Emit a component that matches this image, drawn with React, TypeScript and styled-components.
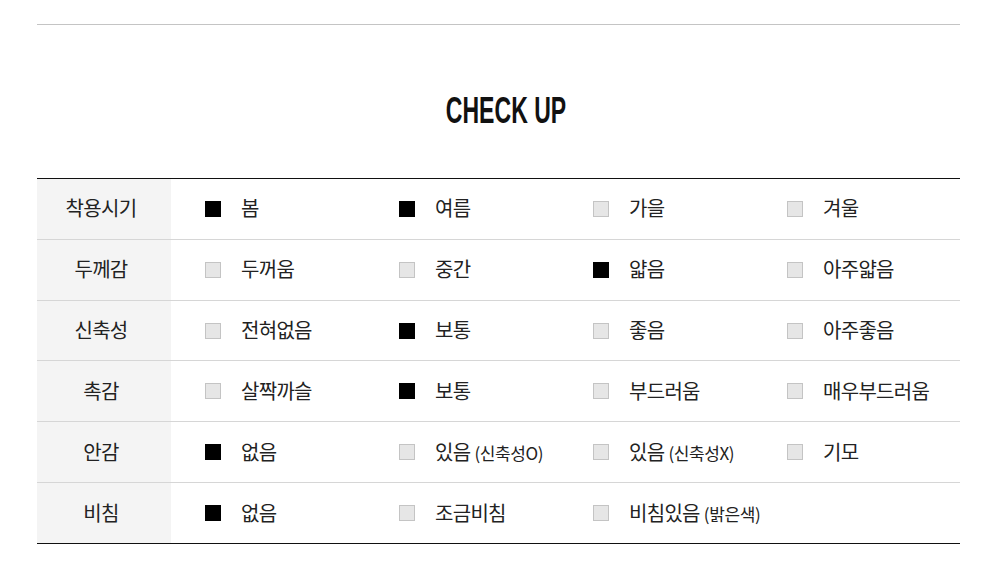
import React from "react";
import styled, { createGlobalStyle } from "styled-components";

const GlobalStyle = createGlobalStyle`
  html, body { margin: 0; padding: 0; background: #fff; }
  body { font-family: "Noto Sans CJK KR", "Noto Sans", sans-serif; color: #222; }
`;

const Page = styled.div`
  width: 923px;
  margin-left: 37px;
  padding-top: 24px;
`;

const TopRule = styled.div`
  height: 1px;
  background: #c4c4c4;
`;

const TitleWrap = styled.div`
  height: 153px;
  display: flex;
  align-items: center;
  justify-content: center;
  padding-left: 16px;
  padding-top: 18px;
  box-sizing: border-box;
`;

const Title = styled.h2`
  margin: 0;
  font-family: "Liberation Sans", Arial, sans-serif;
  font-weight: 700;
  font-size: 36px;
  line-height: 1;
  color: #111;
  transform: scale(0.64, 1.04);
  white-space: nowrap;
`;

const Table = styled.div`
  width: 923px;
  border-top: 1px solid #111;
  border-bottom: 1px solid #111;
`;

const Row = styled.div<{ $last?: boolean }>`
  display: flex;
  height: 59.83px;
  border-bottom: ${(p) => (p.$last ? "none" : "1px solid #d6d6d6")};
`;

const Label = styled.div`
  width: 134px;
  flex: none;
  background: #f4f4f4;
  display: flex;
  align-items: center;
  justify-content: center;
  font-size: 20px;
  letter-spacing: -0.7px;
  color: #222;
  padding-right: 6px;
  padding-bottom: 2px;
  box-sizing: border-box;
`;

const Options = styled.div`
  display: flex;
  align-items: center;
  padding-left: 34px;
`;

const Option = styled.div`
  width: 194px;
  display: flex;
  align-items: center;
`;

const Box = styled.span<{ $on: boolean }>`
  width: 16px;
  height: 16px;
  box-sizing: border-box;
  flex: none;
  background: ${(p) => (p.$on ? "#000" : "#e6e6e6")};
  border: 1px solid ${(p) => (p.$on ? "#000" : "#c4c4c4")};
  margin-right: 20px;
`;

const Text = styled.span`
  font-size: 20px;
  letter-spacing: -0.7px;
  color: #222;
  white-space: nowrap;
  margin-top: -2px;
`;

const Small = styled.span`
  font-size: 17px;
  letter-spacing: -0.4px;
  margin-left: 4px;
`;

type Opt = { t: string; s?: string; on: boolean };
const rows: { label: string; opts: Opt[] }[] = [
  { label: "착용시기", opts: [{ t: "봄", on: true }, { t: "여름", on: true }, { t: "가을", on: false }, { t: "겨울", on: false }] },
  { label: "두께감", opts: [{ t: "두꺼움", on: false }, { t: "중간", on: false }, { t: "얇음", on: true }, { t: "아주얇음", on: false }] },
  { label: "신축성", opts: [{ t: "전혀없음", on: false }, { t: "보통", on: true }, { t: "좋음", on: false }, { t: "아주좋음", on: false }] },
  { label: "촉감", opts: [{ t: "살짝까슬", on: false }, { t: "보통", on: true }, { t: "부드러움", on: false }, { t: "매우부드러움", on: false }] },
  { label: "안감", opts: [{ t: "없음", on: true }, { t: "있음", s: "(신축성O)", on: false }, { t: "있음", s: "(신축성X)", on: false }, { t: "기모", on: false }] },
  { label: "비침", opts: [{ t: "없음", on: true }, { t: "조금비침", on: false }, { t: "비침있음", s: "(밝은색)", on: false }] },
];

export default function App() {
  return (
    <>
      <GlobalStyle />
      <Page>
        <TopRule />
        <TitleWrap>
          <Title>CHECK UP</Title>
        </TitleWrap>
        <Table>
          {rows.map((r, i) => (
            <Row key={r.label} $last={i === rows.length - 1}>
              <Label>{r.label}</Label>
              <Options>
                {r.opts.map((o, j) => (
                  <Option key={j}>
                    <Box $on={o.on} />
                    <Text>
                      {o.t}
                      {o.s && <Small>{o.s}</Small>}
                    </Text>
                  </Option>
                ))}
              </Options>
            </Row>
          ))}
        </Table>
      </Page>
    </>
  );
}
